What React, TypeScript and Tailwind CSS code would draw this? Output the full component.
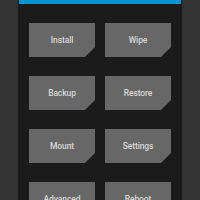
const BUTTONS = ['Install', 'Wipe', 'Backup', 'Restore', 'Mount', 'Settings', 'Advanced', 'Reboot'];

function TileButton({ label }: { label: string }) {
  return (
    <div className="h-[34px] bg-[#676767] flex items-center justify-center [clip-path:polygon(0_0,100%_0,100%_calc(100%-10px),calc(100%-10px)_100%,0_100%)]">
      <span className="text-[8.5px] font-medium text-[#d6d6d6] tracking-[-0.1px]">{label}</span>
    </div>
  );
}

export default function App() {
  return (
    <div className="flex h-[200px] w-[200px] overflow-hidden bg-[#333333] font-['Roboto',sans-serif]">
      <div className="w-[18px] shrink-0 bg-[#333333]" />
      <div className="w-[164px] shrink-0 bg-[#1b1b1b] flex flex-col">
        <div className="h-[4px] shrink-0 mx-[1px] bg-[#0a94cf]" />
        <div className="grid shrink-0 grid-cols-2 gap-x-[10px] gap-y-[19px] px-[11px] pt-[19px]">
          {BUTTONS.map((b) => (
            <TileButton key={b} label={b} />
          ))}
        </div>
      </div>
      <div className="w-[18px] shrink-0 bg-[#333333]" />
    </div>
  );
}
